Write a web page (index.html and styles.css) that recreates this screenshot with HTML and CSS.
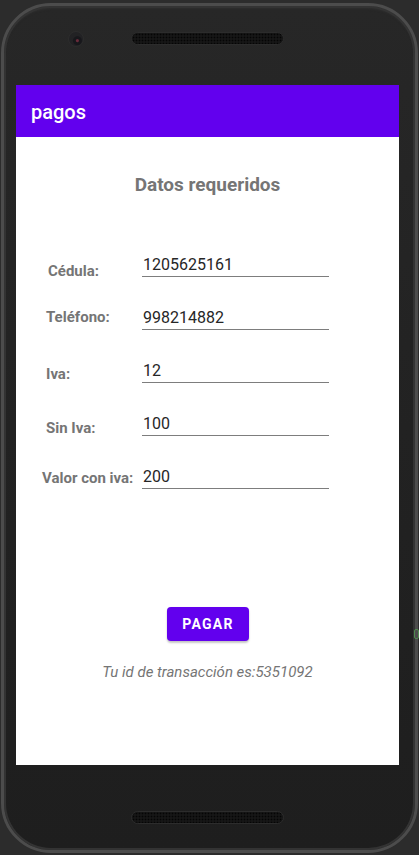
FILE: index.html
```html
<!DOCTYPE html>
<html lang="es">
<head>
<meta charset="utf-8">
<title>pagos</title>
<link rel="stylesheet" href="styles.css">
</head>
<body>
<div class="phone">
  <div class="bezel-top">
    <span class="camera"></span>
    <span class="speaker"></span>
  </div>
  <div class="screen">
    <header class="appbar">pagos</header>
    <main class="content">
      <h1 class="title">Datos requeridos</h1>
      <div class="form">
        <div class="row">
          <span class="label label-cedula">Cédula:</span>
          <span class="field">1205625161</span>
        </div>
        <div class="row">
          <span class="label label-telefono">Teléfono:</span>
          <span class="field">998214882</span>
        </div>
        <div class="row">
          <span class="label label-iva">Iva:</span>
          <span class="field">12</span>
        </div>
        <div class="row">
          <span class="label label-siniva">Sin Iva:</span>
          <span class="field">100</span>
        </div>
        <div class="row">
          <span class="label label-valor">Valor con iva:</span>
          <span class="field">200</span>
        </div>
      </div>
      <button class="btn">PAGAR</button>
      <p class="txn">Tu id de transacción es:5351092</p>
    </main>
  </div>
  <div class="bezel-bottom">
    <span class="speaker"></span>
  </div>
  <span class="side-mark"></span>
</div>
</body>
</html>
```

FILE: styles.css
```css
html, body {
  margin: 0;
  padding: 0;
}
body {
  background: #2c2c2c;
  width: 419px;
  height: 855px;
  overflow: hidden;
  font-family: Roboto, "Liberation Sans", sans-serif;
}
.phone {
  position: relative;
  box-sizing: border-box;
  margin: 3px 0 0 1px;
  width: 417px;
  height: 850px;
  border: 3px solid #4c4c4c;
  border-radius: 50px;
  background: linear-gradient(180deg, #272727 0%, #222222 50%, #1e1e1e 100%);
  box-shadow: inset 0 0 0 2px #333333, inset 0 3px 2px #2e2e2e;
}
.bezel-top {
  display: flex;
  align-items: center;
  padding-top: 26px;
  height: 13px;
  margin-bottom: 40px;
}
.camera {
  box-sizing: border-box;
  width: 16px;
  height: 16px;
  margin-left: 64px;
  margin-right: 47px;
  border-radius: 50%;
  background: radial-gradient(circle at 60% 62%, #6a2a3a 0 1px, #17171b 2px 4px, #222224 5px);
  border: 1px solid #2c2c2c;
}
.speaker {
  display: block;
  box-sizing: border-box;
  width: 153px;
  height: 13px;
  border-radius: 7px;
  border: 1px solid #2c2c2c;
  background-color: #161616;
  background-image: radial-gradient(circle, #050505 0.8px, transparent 1.1px);
  background-size: 3px 3px;
}
.bezel-bottom {
  display: flex;
  padding-left: 127px;
  margin-top: 46px;
}
.screen {
  margin-left: 12px;
  width: 383px;
  height: 680px;
  background: #ffffff;
  display: flex;
  flex-direction: column;
}
.appbar {
  box-sizing: border-box;
  height: 52px;
  padding: 2px 0 0 15px;
  display: flex;
  align-items: center;
  background: #6200ee;
  color: #ffffff;
  font-size: 20px;
  font-weight: 500;
  line-height: 24px;
}
.content {
  display: flex;
  flex-direction: column;
  align-items: center;
}
.title {
  margin: 36px 0 0 0;
  font-size: 19px;
  line-height: 23px;
  font-weight: 700;
  color: #757575;
}
.form {
  align-self: stretch;
  margin-top: 59px;
  display: flex;
  flex-direction: column;
  gap: 31px;
}
.row {
  display: grid;
  grid-template-columns: 126px 187px;
  align-items: start;
  height: 22px;
}
.label {
  padding-left: 30px;
  font-size: 15px;
  line-height: 18px;
  font-weight: 700;
  color: #757575;
  white-space: nowrap;
}
.label-cedula { padding-left: 32px; padding-top: 7px; }
.label-telefono { padding-top: 0; }
.label-iva { padding-top: 4px; }
.label-siniva { padding-top: 5px; }
.label-valor { padding-left: 26px; padding-top: 2px; }
.field {
  display: block;
  padding: 0 0 1px 1px;
  font-size: 16px;
  line-height: 20px;
  color: #262626;
  border-bottom: 1px solid #7d7d7d;
}
.btn {
  margin-top: 118px;
  width: 82px;
  height: 34px;
  border: 0;
  border-radius: 4px;
  background: #6200ee;
  color: #ffffff;
  font-family: Roboto, "Liberation Sans", sans-serif;
  font-size: 14px;
  font-weight: 700;
  letter-spacing: 1.25px;
  padding: 0 0 0 1px;
  box-shadow: 0 2px 2px rgba(0, 0, 0, 0.22), 0 0 1px rgba(0, 0, 0, 0.12);
}
.txn {
  margin: 22px 0 0 0;
  font-size: 15px;
  line-height: 18px;
  font-style: italic;
  color: #757575;
}
.side-mark {
  position: absolute;
  right: -4px;
  top: 623px;
  box-sizing: border-box;
  width: 5px;
  height: 10px;
  border: 1px solid #4f8a4f;
  border-radius: 2px;
}
```
